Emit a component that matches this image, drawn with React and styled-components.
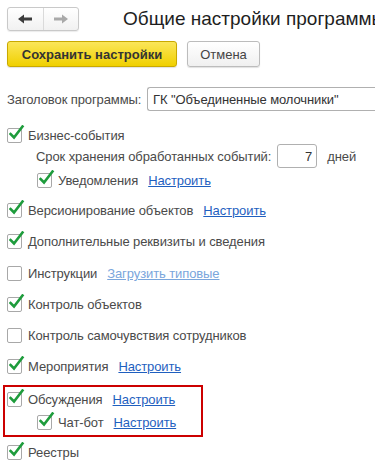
import React from "react";
import styled, { createGlobalStyle } from "styled-components";

const Global = createGlobalStyle`
    html, body {
        margin: 0;
        padding: 0;
        background: #fff;
    }
    body {
        width: 375px;
        height: 470px;
        overflow: hidden;
        font-family: "Liberation Sans", Arial, sans-serif;
        font-size: 13px;
        letter-spacing: -0.1px;
        color: #4a4a4a;
    }
`;

const Page = styled.div`
    padding: 7px 0 0 7px;
    display: flex;
    flex-direction: column;
`;

const Header = styled.div`
    display: flex;
    align-items: center;
    height: 24px;
`;

const NavGroup = styled.div`
    display: flex;
    flex-shrink: 0;
    width: 72px;
    height: 24px;
    box-sizing: border-box;
    border: 1px solid #c9c9c9;
    border-radius: 3px;
    background: linear-gradient(#ffffff, #f1f1f1);
    box-shadow: 0 1px 1px rgba(0, 0, 0, 0.08);
`;

const NavButton = styled.div`
    flex: 1;
    display: flex;
    align-items: center;
    justify-content: center;
    & + & {
        border-left: 1px solid #dadada;
    }
`;

const Title = styled.h1`
    margin: 0 0 0 44px;
    font-size: 19px;
    font-weight: normal;
    letter-spacing: 0;
    color: #1e1e1e;
    white-space: nowrap;
`;

const Toolbar = styled.div`
    display: flex;
    gap: 10px;
    margin-top: 10px;
`;

const Button = styled.div`
    height: 26px;
    box-sizing: border-box;
    display: flex;
    align-items: center;
    justify-content: center;
    border-radius: 3px;
    font-size: 13px;
    letter-spacing: 0;
    font-weight: ${props => (props.$primary ? "bold" : "normal")};
    color: ${props => (props.$primary ? "#333" : "#444")};
    border: 1px solid ${props => (props.$primary ? "#c9a900" : "#bcbcbc")};
    background: ${props =>
        props.$primary
            ? "linear-gradient(#fbe65a, #f0d000)"
            : "linear-gradient(#ffffff, #f0f0f0)"};
    box-shadow: 0 1px 1px rgba(0, 0, 0, 0.12);
    width: ${props => props.$width}px;
`;

const FieldRow = styled.div`
    display: flex;
    align-items: center;
    margin-top: 20px;
    height: 24px;
`;

const Label = styled.span`
    width: 140px;
    white-space: nowrap;
`;

const TextInput = styled.div`
    flex: 1;
    height: 24px;
    box-sizing: border-box;
    border: 1px solid #b0b0b0;
    border-right: none;
    border-radius: 3px 0 0 3px;
    padding: 0 5px;
    display: flex;
    align-items: center;
    color: #333;
    white-space: nowrap;
    overflow: hidden;
`;

const Row = styled.div`
    display: flex;
    align-items: center;
    min-height: 15px;
    margin-top: ${props => props.$gap}px;
    padding-left: ${props => props.$indent || 0}px;
    white-space: nowrap;
`;

const Box = styled.span`
    position: relative;
    width: 15px;
    height: 15px;
    box-sizing: border-box;
    border: 1px solid #a8a8a8;
    border-radius: 2px;
    background: #fff;
    margin-right: 6px;
    flex-shrink: 0;
    svg {
        position: absolute;
        left: 1px;
        top: -4px;
    }
`;

const Link = styled.span`
    margin-left: ${props => props.$gap || 10}px;
    color: ${props => (props.$muted ? "#7aa6dc" : "#1f5fbf")};
    text-decoration: underline;
    cursor: pointer;
`;

const NumberInput = styled.div`
    width: 40px;
    height: 24px;
    box-sizing: border-box;
    border: 1px solid #b0b0b0;
    border-radius: 3px;
    margin: 0 10px 0 6px;
    padding-right: 4px;
    display: flex;
    align-items: center;
    justify-content: flex-end;
    color: #333;
`;

const Highlight = styled.div`
    width: 200px;
    box-sizing: border-box;
    margin: 11px 0 0 -4px;
    padding: 5px 0 5px 2px;
    border: 2px solid #cc0000;
`;

const Check = () => (
    <svg width="16" height="16" viewBox="0 0 16 16">
        <path
            d="M1.5 9 L5 12.5 L13.5 1.5"
            fill="none"
            stroke="#1e9c3c"
            strokeWidth="2.6"
            strokeLinecap="square"
        />
    </svg>
);

const CheckBox = ({ checked }) => <Box>{checked && <Check />}</Box>;

const Arrow = ({ dir, color }) => (
    <svg width="14" height="10" viewBox="0 0 14 10">
        <g transform={dir === "right" ? "translate(14 0) scale(-1 1)" : undefined}>
            <polygon points="0,5 6,0.5 6,9.5" fill={color} />
            <rect x="5" y="3.5" width="9" height="3" fill={color} />
        </g>
    </svg>
);

const Item = ({ checked, label, link, muted, gap, indent, linkGap }) => (
    <Row $gap={gap} $indent={indent}>
        <CheckBox checked={checked} />
        {label}
        {link && (
            <Link $muted={muted} $gap={linkGap}>
                {link}
            </Link>
        )}
    </Row>
);

export default function App() {
    return (
        <Page>
            <Global />
            <Header>
                <NavGroup>
                    <NavButton>
                        <Arrow dir="left" color="#3c3c3c" />
                    </NavButton>
                    <NavButton>
                        <Arrow dir="right" color="#a9a9a9" />
                    </NavButton>
                </NavGroup>
                <Title>Общие настройки программы</Title>
            </Header>
            <Toolbar>
                <Button $primary $width={170}>Сохранить настройки</Button>
                <Button $width={73}>Отмена</Button>
            </Toolbar>
            <FieldRow>
                <Label>Заголовок программы:</Label>
                <TextInput>ГК "Объединенные молочники"</TextInput>
            </FieldRow>
            <Item checked gap={17} label="Бизнес-события" />
            <Row $gap={1} $indent={29}>
                Срок хранения обработанных событий:
                <NumberInput>7</NumberInput>
                дней
            </Row>
            <Item checked gap={5} indent={30} label="Уведомления" link="Настроить" />
            <Item checked gap={15} label="Версионирование объектов" link="Настроить" />
            <Item checked gap={16} label="Дополнительные реквизиты и сведения" />
            <Item gap={17} label="Инструкции" link="Загрузить типовые" muted />
            <Item checked gap={16} label="Контроль объектов" />
            <Item gap={16} label="Контроль самочувствия сотрудников" />
            <Item checked gap={16} label="Мероприятия" link="Настроить" />
            <Highlight>
                <Item checked gap={0} label="Обсуждения" link="Настроить" />
                <Item checked gap={8} indent={30} label="Чат-бот" link="Настроить" />
            </Highlight>
            <Item checked gap={8} label="Реестры" />
        </Page>
    );
}
